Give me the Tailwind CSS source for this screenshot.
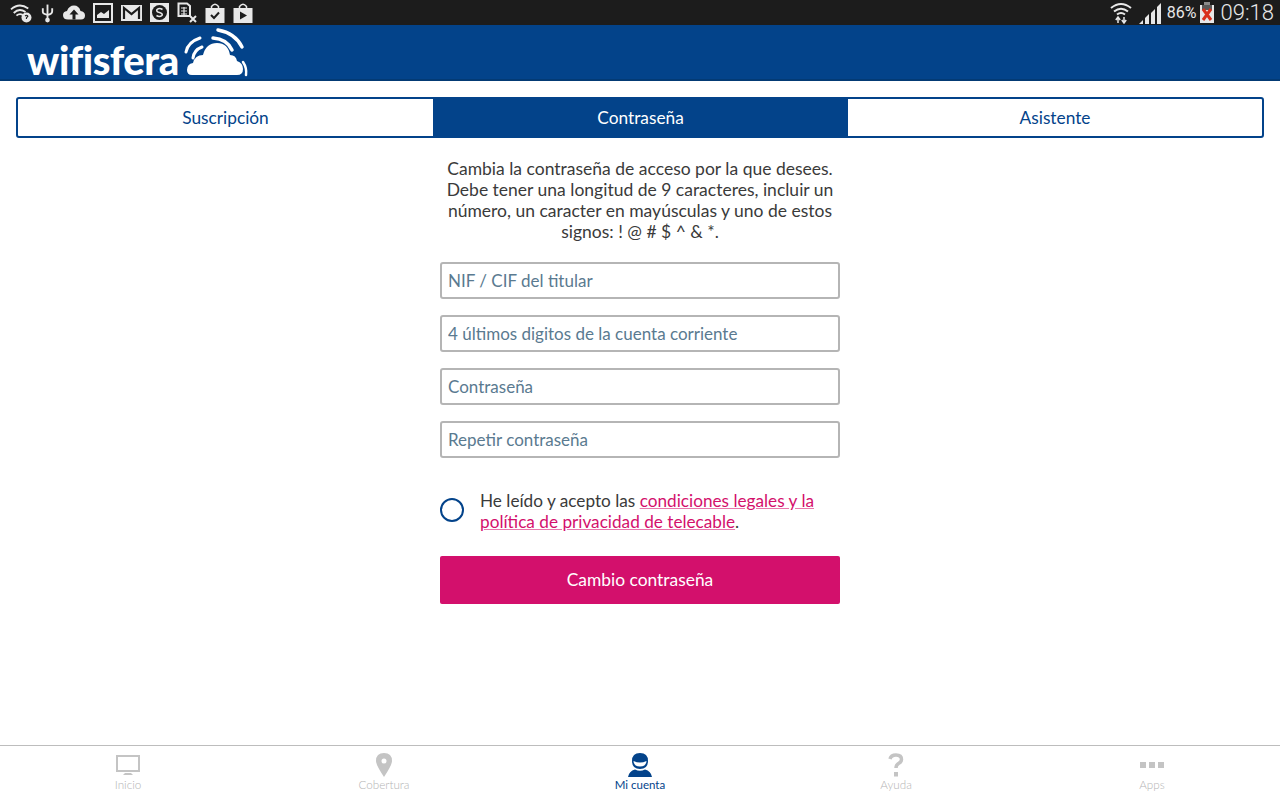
<!DOCTYPE html>
<html lang="es">
<head>
  <meta charset="UTF-8" />
  <meta name="viewport" content="width=device-width, initial-scale=1" />
  <title>Wifisfera - Mi cuenta</title>
  <script src="https://cdn.jsdelivr.net/npm/@tailwindcss/browser@4"></script>
</head>
<body class="bg-white w-[1280px] h-[800px] overflow-hidden flex flex-col font-['Lato',sans-serif]">

  <!-- Status bar -->
  <div class="h-[25px] bg-[#1c1c1c] flex items-center justify-between text-[#e8e8e8] shrink-0">
    <div class="flex items-center pl-[10px] gap-[8px]">
      <svg class="w-[22px] h-[20px]" viewBox="0 0 24 22" fill="none" stroke="#e8e8e8" stroke-width="2"><path d="M1 7 Q10 -1 20 6"/><path d="M4 11 Q10 5 17 10"/><path d="M7 14 Q10 11 14 13"/><circle cx="18" cy="16" r="5.500" fill="#e8e8e8" stroke="none"/><path d="M16.500 14.500 Q18 12.500 19.500 14.500 L18 16.500 V17.500" stroke="#1c1c1c" stroke-width="1.300"/></svg>
      <svg class="w-[15px] h-[20px]" viewBox="0 0 16 20" fill="none" stroke="#e8e8e8" stroke-width="2"><path d="M8 1 V18"/><path d="M3 5 V9 Q3 11 8 12 Q13 11 13 8 V5"/><circle cx="8" cy="17.500" r="1.500" fill="#e8e8e8"/></svg>
      <svg class="w-[22px] h-[17px]" viewBox="0 0 22 16" fill="#e8e8e8"><path d="M5 15 Q0 15 0 10.500 Q0 7 4 6.500 Q6 1 11 1 Q16 1 17.500 6.500 Q22 7 22 11 Q22 15 18 15 Z"/><path d="M11 5 L15.500 10 H12.500 V15 H9.500 V10 H6.500 Z" fill="#1c1c1c"/></svg>
      <svg class="w-[20px] h-[20px]" viewBox="0 0 20 20"><rect x="1" y="1" width="18" height="18" fill="#1c1c1c" stroke="#e8e8e8" stroke-width="2"/><path d="M4 15 V12 L8 9 L11 11 L16 7 V15 Z" fill="#e8e8e8"/></svg>
      <svg class="w-[21px] h-[16px]" viewBox="0 0 21 16"><rect width="21" height="16" fill="#e8e8e8"/><path d="M3 14 V3 L10.500 9 L18 3 V14" fill="none" stroke="#1c1c1c" stroke-width="2.200"/></svg>
      <svg class="w-[19px] h-[19px]" viewBox="0 0 19 19"><rect width="19" height="19" fill="#e8e8e8"/><circle cx="9.500" cy="9.500" r="7.500" fill="#1c1c1c"/><path d="M12.500 6.500 Q9.500 4.500 7 6.500 Q6 9 9.500 9.500 Q13 10.500 12 12.500 Q9.500 14.500 6.500 12.500" fill="none" stroke="#e8e8e8" stroke-width="1.600"/></svg>
      <svg class="w-[20px] h-[21px]" viewBox="0 0 20 21" fill="none"><path d="M1.500 1.500 H10 L13 4 V14 H1.500 Z" stroke="#e8e8e8" stroke-width="2"/><path d="M4 6 H10 M4 9 H10 M4 12 H10 M7 5 V14" stroke="#e8e8e8" stroke-width="1.200"/><path d="M13 14 L19 20 M19 14 L13 20" stroke="#e8e8e8" stroke-width="2"/></svg>
      <svg class="w-[20px] h-[20px]" viewBox="0 0 19 20"><path d="M0 5 H19 V20 H0 Z" fill="#e8e8e8"/><path d="M6 6 V3.500 Q9.500 -1 13 3.500 V6" fill="none" stroke="#e8e8e8" stroke-width="1.500"/><path d="M5.500 12 L8.500 15 L13.500 9.500" fill="none" stroke="#1c1c1c" stroke-width="2"/></svg>
      <svg class="w-[20px] h-[20px]" viewBox="0 0 19 20"><path d="M0 5 H19 V20 H0 Z" fill="#e8e8e8"/><path d="M6 6 V3.500 Q9.500 -1 13 3.500 V6" fill="none" stroke="#e8e8e8" stroke-width="1.500"/><path d="M6.500 8.500 L13.500 12.500 L6.500 16.500 Z" fill="#1c1c1c"/></svg>
    </div>
    <div class="flex items-center pr-[6px]">
      <svg class="w-[22px] h-[22px] mr-[7px]" viewBox="0 0 22 22" fill="none" stroke="#e8e8e8" stroke-width="2"><path d="M1 6 Q11 -2 21 6"/><path d="M4 9.500 Q11 4 18 9.500"/><path d="M7 12.500 Q11 9.500 15 12.500"/><path d="M8 15 V21 M5.800 18 L8 15 L10.200 18 M14 21 V15 M11.800 18 L14 21 L16.200 18" stroke-width="1.500"/></svg>
      <svg class="w-[23px] h-[22px] mr-[5px]" viewBox="0 0 23 22" fill="#e8e8e8"><path d="M0 22 H4 V18 Z"/><path d="M6 22 H10 V12 L6 16 Z"/><path d="M12 22 H16 V7 L12 11 Z"/><path d="M18 22 H22 V1 L18 5 Z"/></svg>
      <span class="text-[16px] leading-none font-['Roboto',sans-serif] mr-[3px]">86%</span>
      <svg class="w-[14px] h-[21px] mr-[7px]" viewBox="0 0 14 21"><rect x="4" y="0" width="6" height="3" fill="#8a8a8a"/><rect x="0" y="3" width="14" height="18" fill="#e8e8e8"/><rect x="2" y="3" width="10" height="5" fill="#5a5a5a"/><path d="M3 7 L11 18 M11 7 L3 18" stroke="#d9301c" stroke-width="3"/></svg>
      <span class="text-[22px] leading-none font-['Roboto',sans-serif] font-light">09:18</span>
    </div>
  </div>

  <!-- App header -->
  <div class="h-[56px] bg-[#03438a] border-b-2 border-[#033a74] flex items-start pl-[27px] shrink-0">
    <span class="w-[153px] text-white font-black text-[40px] leading-none tracking-[-0.5px] mt-[15px]">wifisfera</span>
    <svg class="w-[70px] h-[54px]" viewBox="0 0 70 54" fill="none" stroke="white" stroke-linecap="round">
      <path d="M12 50 Q7 50 7 45 Q7 39 13 38 Q15 30 23 30 Q26 18 37 18 Q48 18 50 30 Q56 30 57 36 Q63 38 63 44 Q63 50 57 50 Z" fill="white" stroke="none"/>
      <path d="M6 27 Q8 17 20 13" stroke-width="3"/>
      <path d="M13 33 Q14 25 22 22" stroke-width="3"/>
      <path d="M38 5 Q55 8 62 22" stroke-width="3.500"/>
      <path d="M33 13 Q47 14 52 25" stroke-width="3.500"/>
      <path d="M63 37 Q67 43 66 50" stroke-width="2.500"/>
    </svg>
  </div>

  <!-- Main content -->
  <div class="flex-1 px-4 pt-4">
    <div class="flex h-[41px] border-2 border-[#03438a] rounded-[3px] text-[17.3px] text-[#03438a] overflow-hidden">
      <div class="w-[415px] flex items-center justify-center">Suscripción</div>
      <div class="w-[415px] flex items-center justify-center bg-[#03438a] text-white">Contraseña</div>
      <div class="flex-1 flex items-center justify-center">Asistente</div>
    </div>

    <div class="w-[400px] mx-auto">
      <p class="mt-[20px] text-center text-[17.5px] leading-[21px] text-[#3a3a3a]">Cambia la contraseña de acceso por la que desees.<br />Debe tener una longitud de 9 caracteres, incluir un<br />número, un caracter en mayúsculas y uno de estos<br />signos: ! @ # $ ^ &amp; *.</p>

      <div class="mt-[20px] flex flex-col gap-[16px]">
        <input type="text" placeholder="NIF / CIF del titular" class="h-[37px] w-full border-2 border-[#b5b5b5] rounded-[3px] pl-[6px] pr-[6px] pb-[1px] text-[17px] placeholder:text-[#5a7a90]" />
        <input type="text" placeholder="4 últimos digitos de la cuenta corriente" class="h-[37px] w-full border-2 border-[#b5b5b5] rounded-[3px] pl-[6px] pr-[6px] pb-[1px] text-[17px] placeholder:text-[#5a7a90]" />
        <input type="password" placeholder="Contraseña" class="h-[37px] w-full border-2 border-[#b5b5b5] rounded-[3px] pl-[6px] pr-[6px] pb-[1px] text-[17px] placeholder:text-[#5a7a90]" />
        <input type="password" placeholder="Repetir contraseña" class="h-[37px] w-full border-2 border-[#b5b5b5] rounded-[3px] pl-[6px] pr-[6px] pb-[1px] text-[17px] placeholder:text-[#5a7a90]" />
      </div>

      <div class="mt-[32px] flex items-center gap-[16px]">
        <div class="w-[24px] h-[24px] mb-[2px] rounded-full border-2 border-[#03438a] shrink-0"></div>
        <p class="text-[17.2px] leading-[21px] text-[#3a3a3a]">He leído y acepto las <a href="#" class="text-[#d3106c] underline decoration-[#e878ac]">condiciones legales y la<br />política de privacidad de telecable</a>.</p>
      </div>

      <button class="mt-[24px] w-full h-[48px] bg-[#d3106c] rounded-[2px] text-white text-[17.4px]">Cambio contraseña</button>
    </div>
  </div>

  <!-- Bottom nav -->
  <div class="h-[55px] border-t border-[#bdbdbd] grid grid-cols-5 text-[11.7px] font-light leading-[14px] text-[#b4b4b4] shrink-0">
    <div class="flex flex-col items-center pt-[9px]">
      <svg class="w-[24px] h-[22px]" viewBox="0 0 24 22" fill="none"><rect x="1" y="1" width="22" height="15" stroke="#c4c4c4" stroke-width="2"/><path d="M7 20 L9 18 H15 L17 20 Z" fill="#c4c4c4"/></svg>
      <span>Inicio</span>
    </div>
    <div class="flex flex-col items-center pt-[7px]">
      <svg class="w-[16px] h-[24px]" viewBox="0 0 16 24"><path fill-rule="evenodd" d="M8 0 Q16 0 16 8 Q16 12 8 24 Q0 12 0 8 Q0 0 8 0 Z M8 5.500 A2.500 2.500 0 1 0 8 10.500 A2.500 2.500 0 1 0 8 5.500 Z" fill="#c4c4c4"/></svg>
      <span>Cobertura</span>
    </div>
    <div class="flex flex-col items-center pt-[7px] text-[#03438a] text-[11.5px] font-normal">
      <svg class="w-[24px] h-[24px]" viewBox="0 0 24 24"><path fill-rule="evenodd" d="M12 0 Q20 0 20 8 Q20 16 12 16 Q4 16 4 8 Q4 0 12 0 Z M5.500 8 Q12 11 18.500 8 Q18 13.500 12 13.500 Q6 13.500 5.500 8 Z" fill="#03438a"/><path d="M0 24 Q1 18 7 16.500 Q12 19 17 16.500 Q23 18 24 24 Z" fill="#03438a"/></svg>
      <span class="mt-[1px]">Mi cuenta</span>
    </div>
    <div class="flex flex-col items-center pt-[7px]">
      <svg class="w-[16px] h-[24px]" viewBox="0 0 16 24" fill="none"><path d="M2 6 Q3 2 8 2 Q13.500 2 13.500 6.500 Q13.500 9 10.500 10.500 Q8 12 8 15" stroke="#c4c4c4" stroke-width="3.500"/><rect x="6" y="19" width="4" height="4.500" fill="#c4c4c4"/></svg>
      <span>Ayuda</span>
    </div>
    <div class="flex flex-col items-center pt-[16px]">
      <div class="flex gap-[3px]">
        <div class="w-[6px] h-[6px] bg-[#c4c4c4]"></div>
        <div class="w-[6px] h-[6px] bg-[#c4c4c4]"></div>
        <div class="w-[6px] h-[6px] bg-[#c4c4c4]"></div>
      </div>
      <span class="mt-[9px]">Apps</span>
    </div>
  </div>
</body>
</html>
